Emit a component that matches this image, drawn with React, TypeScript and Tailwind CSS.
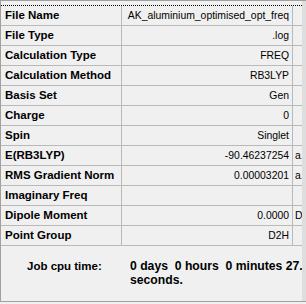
import React from "react";

type Row = { label: string; value: string; unit?: string };

const rows: Row[] = [
  { label: "File Name", value: "AK_aluminium_optimised_opt_freq" },
  { label: "File Type", value: ".log" },
  { label: "Calculation Type", value: "FREQ" },
  { label: "Calculation Method", value: "RB3LYP" },
  { label: "Basis Set", value: "Gen" },
  { label: "Charge", value: "0" },
  { label: "Spin", value: "Singlet" },
  { label: "E(RB3LYP)", value: "-90.46237254", unit: "a.u." },
  { label: "RMS Gradient Norm", value: "0.00003201", unit: "a.u." },
  { label: "Imaginary Freq", value: "" },
  { label: "Dipole Moment", value: "0.0000", unit: "Debye" },
  { label: "Point Group", value: "D2H" },
];

export default function App() {
  return (
    <div
      className="relative w-[306px] h-[304px] overflow-hidden bg-[#f0f0f0] text-black"
      style={{ fontFamily: '"Liberation Sans", Arial, sans-serif' }}
    >
      <div className="flex h-[302px] border-l border-t border-b border-[#a0a0a0]">
        <div className="flex min-w-0 flex-1 flex-col overflow-hidden">
          {/* properties grid */}
          <div className="pt-[4px]">
            <div className="border-t border-dotted border-black" />
            {rows.map((r) => (
              <div key={r.label} className="flex h-[20px] border-b border-[#b9b9b9]">
                <div className="w-[121px] shrink-0 border-r border-[#b9b9b9] pl-[4px] text-[11.5px] font-bold leading-[19px] whitespace-nowrap">
                  {r.label}
                </div>
                <div className="w-[171px] shrink-0 border-r border-[#b9b9b9] pr-[3px] text-right text-[10.4px] leading-[19px] whitespace-nowrap overflow-hidden">
                  {r.value}
                </div>
                <div className="min-w-0 flex-1 overflow-hidden pl-[2px] text-[10.4px] leading-[19px] whitespace-nowrap">
                  {r.unit}
                </div>
              </div>
            ))}
          </div>

          {/* job timing footer */}
          <div className="flex flex-1 pt-[13px] text-[11.5px] font-bold leading-[14px]">
            <div className="w-[129px] shrink-0 pl-[26px]">Job cpu time:</div>
            <div className="w-[200px] shrink-0 whitespace-pre text-[12.2px]">
              {"0 days  0 hours  0 minutes 27.9\nseconds."}
            </div>
          </div>
        </div>
        <div className="w-[4px] shrink-0 bg-[#dedede]" />
      </div>
    </div>
  );
}
